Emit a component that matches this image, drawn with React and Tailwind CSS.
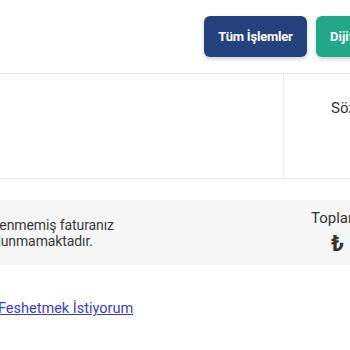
export default function App() {
  return (
    <div className="w-[350px] h-[350px] overflow-hidden bg-white relative" style={{ fontFamily: "Roboto, 'Noto Sans', sans-serif" }}>
      <div className="flex gap-[9px] pl-[204px] pt-4 pb-4 border-b border-[#e6e6e6] whitespace-nowrap">
        <button className="h-[41px] w-[103px] shrink-0 rounded-[6px] bg-[#23427e] text-white text-[13px] font-bold shadow-[0_2px_4px_rgba(0,0,0,0.2)] tracking-[-0.2px]">
          Tüm İşlemler
        </button>
        <button className="h-[41px] w-[120px] shrink-0 rounded-[6px] bg-[#22a789] text-white text-[13px] font-bold text-left pl-[14px] shadow-[0_2px_4px_rgba(0,0,0,0.2)]">
          Dijital İşlemler
        </button>
      </div>
      <div className="flex h-[105px] border-b border-[#ececec]">
        <div className="w-[284px] shrink-0 border-r border-[#ececec]"></div>
        <div className="pl-[47px] pt-[23px] text-[15px] text-[#333] whitespace-nowrap">Sözleşme</div>
      </div>
      <div className="mt-[21px] h-[65px] bg-[#f6f6f6] flex whitespace-nowrap">
        <div className="w-[329px] shrink-0 ml-[-18px] pt-[17px] text-[14px] leading-[16px] text-[#3a3a3a] tracking-[-0.1px]">
          Ödenmemiş faturanız<br />bulunmamaktadır.
        </div>
        <div className="flex flex-col pt-[9px] text-[#333]">
          <span className="text-[15px] leading-[18px]">Toplam Borç</span>
          <span className="pl-[20px] pt-[6px] text-[22px] leading-[22px] font-bold">₺</span>
        </div>
      </div>
      <div className="pt-[31px] ml-[-2px] whitespace-nowrap">
        <a href="#" className="text-[14.5px] text-[#3b3bd6] underline">Feshetmek İstiyorum</a>
      </div>
    </div>
  );
}
